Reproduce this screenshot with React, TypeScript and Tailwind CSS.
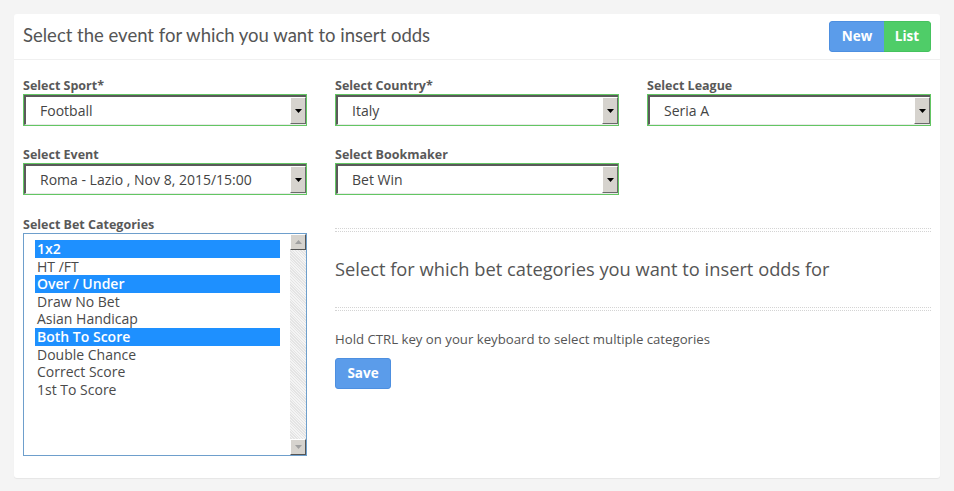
import React from 'react';

const body = { fontFamily: '"Open Sans", "Liberation Sans", sans-serif' };
const head = { fontFamily: 'Lato, "Open Sans", sans-serif' };

function Arrow({ up = false, color = '#000' }: { up?: boolean; color?: string }) {
    return (
        <svg width="7" height="4" viewBox="0 0 7 4">
            <path d={up ? 'M0 4 L3.5 0 L7 4 Z' : 'M0 0 L7 0 L3.5 4 Z'} fill={color} />
        </svg>
    );
}

function SelectBox({ label, value }: { label: string; value: string }) {
    return (
        <div className="flex flex-col">
            <label className="text-[12.5px] font-bold text-[#595959] leading-[17px]">{label}</label>
            <div className="h-[32px] border border-[#63c663] flex">
                <div className="flex-1 flex border-t-2 border-l-2 border-[#5a5a5a] border-b border-b-[#e9e9e9] bg-white">
                    <div className="flex-1 flex items-center pl-[14px] text-[14px] text-[#444]">{value}</div>
                    <div className="w-[16px] bg-[#d6d3ce] border-l border-t border-white border-r border-r-[#6a6a6a] border-b border-b-[#6a6a6a] flex items-center justify-center">
                        <Arrow />
                    </div>
                </div>
            </div>
        </div>
    );
}

const categories = [
    { name: '1x2', sel: true },
    { name: 'HT /FT', sel: false },
    { name: 'Over / Under', sel: true },
    { name: 'Draw No Bet', sel: false },
    { name: 'Asian Handicap', sel: false },
    { name: 'Both To Score', sel: true },
    { name: 'Double Chance', sel: false },
    { name: 'Correct Score', sel: false },
    { name: '1st To Score', sel: false },
];

function DottedLine() {
    return (
        <div className="flex flex-col gap-[2px]">
            <div className="border-t border-dotted border-[#d4d4d4]" />
            <div className="border-t border-dotted border-[#d4d4d4]" />
        </div>
    );
}

export default function App() {
    return (
        <div className="min-h-[491px] w-[954px] bg-[#f4f4f4] p-[14px] pb-[13px]" style={body}>
            <div className="bg-white rounded-[3px] shadow-[0_1px_1px_rgba(0,0,0,0.06)] h-[464px] flex flex-col">
                <div className="h-[46px] flex items-center justify-between pl-[9px] pr-[9px] border-b border-[#f0f0f0]">
                    <h1 className="text-[18.5px] text-[#555] font-normal -mt-[1px]" style={head}>
                        Select the event for which you want to insert odds
                    </h1>
                    <div className="flex rounded-[3px] overflow-hidden">
                        <button className="h-[31px] w-[55px] bg-[#5b9cea] text-white font-bold text-[13.5px] border border-r-0 border-[#4d8fe0] rounded-l-[3px]">New</button>
                        <button className="h-[31px] w-[47px] bg-[#4fcd68] text-white font-bold text-[13.5px] border border-l-0 border-[#45c25e] rounded-r-[3px]">List</button>
                    </div>
                </div>

                <div className="px-[9px] pt-[17px]">
                    <div className="grid grid-cols-3 gap-x-[28px] gap-y-[20px]">
                        <SelectBox label="Select Sport*" value="Football" />
                        <SelectBox label="Select Country*" value="Italy" />
                        <SelectBox label="Select League" value="Seria A" />
                        <SelectBox label="Select Event" value="Roma - Lazio , Nov 8, 2015/15:00" />
                        <SelectBox label="Select Bookmaker" value="Bet Win" />
                        <div />
                    </div>

                    <div className="grid grid-cols-3 gap-x-[28px] mt-[21px]">
                        <div className="flex flex-col">
                            <label className="text-[12.5px] font-bold text-[#595959] leading-[17px]">Select Bet Categories</label>
                            <div className="h-[223px] border border-[#6e9fcc] flex bg-white">
                                <div className="flex-1 pl-[11px] pr-[10px] pt-[6px]">
                                    {categories.map(c => (
                                        <div
                                            key={c.name}
                                            className={`h-[17.6px] leading-[17px] pl-[2px] text-[14px] ${c.sel ? 'bg-[#1e90ff] text-white font-semibold' : 'text-[#4a4a4a]'}`}
                                        >
                                            {c.name}
                                        </div>
                                    ))}
                                </div>
                                <div className="w-[16px] flex flex-col bg-[#ececec] bg-[repeating-linear-gradient(45deg,#e4e4e4_0_1px,#f4f4f4_1px_2px)]">
                                    <div className="h-[16px] bg-[#d6d3ce] border-l border-t border-white border-r border-r-[#555] border-b border-b-[#555] flex items-center justify-center">
                                        <Arrow up color="#a0a0a0" />
                                    </div>
                                    <div className="flex-1" />
                                    <div className="h-[16px] bg-[#d6d3ce] border-l border-t border-white border-r border-r-[#555] border-b border-b-[#555] flex items-center justify-center">
                                        <Arrow color="#a0a0a0" />
                                    </div>
                                </div>
                            </div>
                        </div>

                        <div className="col-span-2 pt-[12px]">
                            <DottedLine />
                            <h2 className="text-[18.3px] text-[#555] mt-[25px] leading-[24px]">
                                Select for which bet categories you want to insert odds for
                            </h2>
                            <div className="mt-[26px]">
                                <DottedLine />
                            </div>
                            <p className="text-[13.2px] text-[#555] mt-[19px] leading-[18px]">
                                Hold CTRL key on your keyboard to select multiple categories
                            </p>
                            <button className="mt-[10px] h-[31px] w-[56px] bg-[#5b9cea] border border-[#4d8fe0] rounded-[3px] text-white font-bold text-[13.5px]">
                                Save
                            </button>
                        </div>
                    </div>
                </div>
            </div>
        </div>
    );
}
